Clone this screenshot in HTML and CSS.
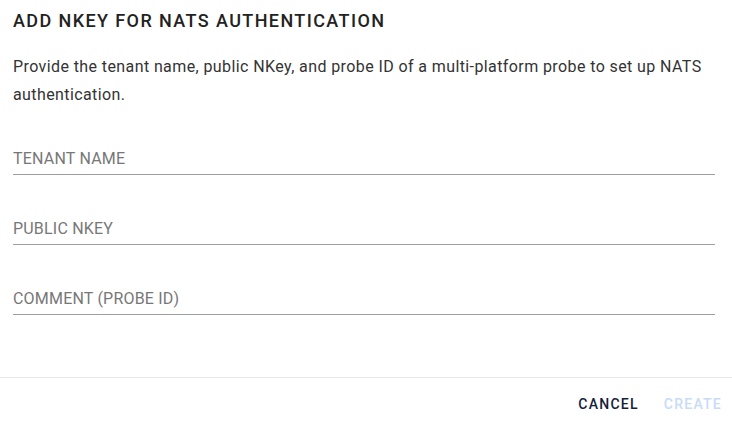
FILE: index.html
```html
<!DOCTYPE html>
<html lang="en">
<head>
<meta charset="utf-8">
<title>Add NKey</title>
<link rel="stylesheet" href="styles.css">
</head>
<body>
<div class="dialog">
  <div class="content">
    <h2 class="title">ADD NKEY FOR NATS AUTHENTICATION</h2>
    <p class="desc">Provide the tenant name, public NKey, and probe ID of a multi-platform probe to set up NATS authentication.</p>
    <div class="fields">
      <div class="field"><span class="label">TENANT NAME</span></div>
      <div class="field"><span class="label">PUBLIC NKEY</span></div>
      <div class="field"><span class="label">COMMENT (PROBE ID)</span></div>
    </div>
  </div>
  <div class="actions">
    <button class="btn btn-cancel">CANCEL</button>
    <button class="btn btn-create" disabled>CREATE</button>
  </div>
</div>
</body>
</html>
```

FILE: styles.css
```css
html, body {
  margin: 0;
  padding: 0;
  background: #ffffff;
}
body {
  font-family: Roboto, "Liberation Sans", sans-serif;
  width: 732px;
  height: 422px;
  overflow: hidden;
}
.content {
  padding: 7px 17px 0 13px;
}
.title {
  margin: 0;
  font-size: 18px;
  font-weight: 500;
  line-height: 28px;
  color: #222222;
  letter-spacing: 1.4px;
}
.desc {
  margin: 18px 0 0;
  font-size: 16px;
  line-height: 28px;
  color: #333333;
  letter-spacing: 0.4px;
}
.fields {
  display: flex;
  flex-direction: column;
  gap: 44px;
  margin-top: 40px;
}
.field {
  padding-bottom: 5px;
  border-bottom: 1px solid #9e9e9e;
}
.label {
  display: block;
  font-size: 16px;
  line-height: 20px;
  color: #777777;
  letter-spacing: 0.2px;
}
.actions {
  margin-top: 62px;
  border-top: 1px solid #e6e6e6;
  display: flex;
  justify-content: flex-end;
  gap: 9px;
  padding: 8px 2px 0 0;
}
.btn {
  background: none;
  border: none;
  font-family: Roboto, "Liberation Sans", sans-serif;
  font-size: 14px;
  font-weight: 500;
  letter-spacing: 1.25px;
  line-height: 36px;
  padding: 0 8px;
  cursor: pointer;
}
.btn-cancel {
  color: #161c3c;
}
.btn-create {
  color: #c8dbf8;
}
```
